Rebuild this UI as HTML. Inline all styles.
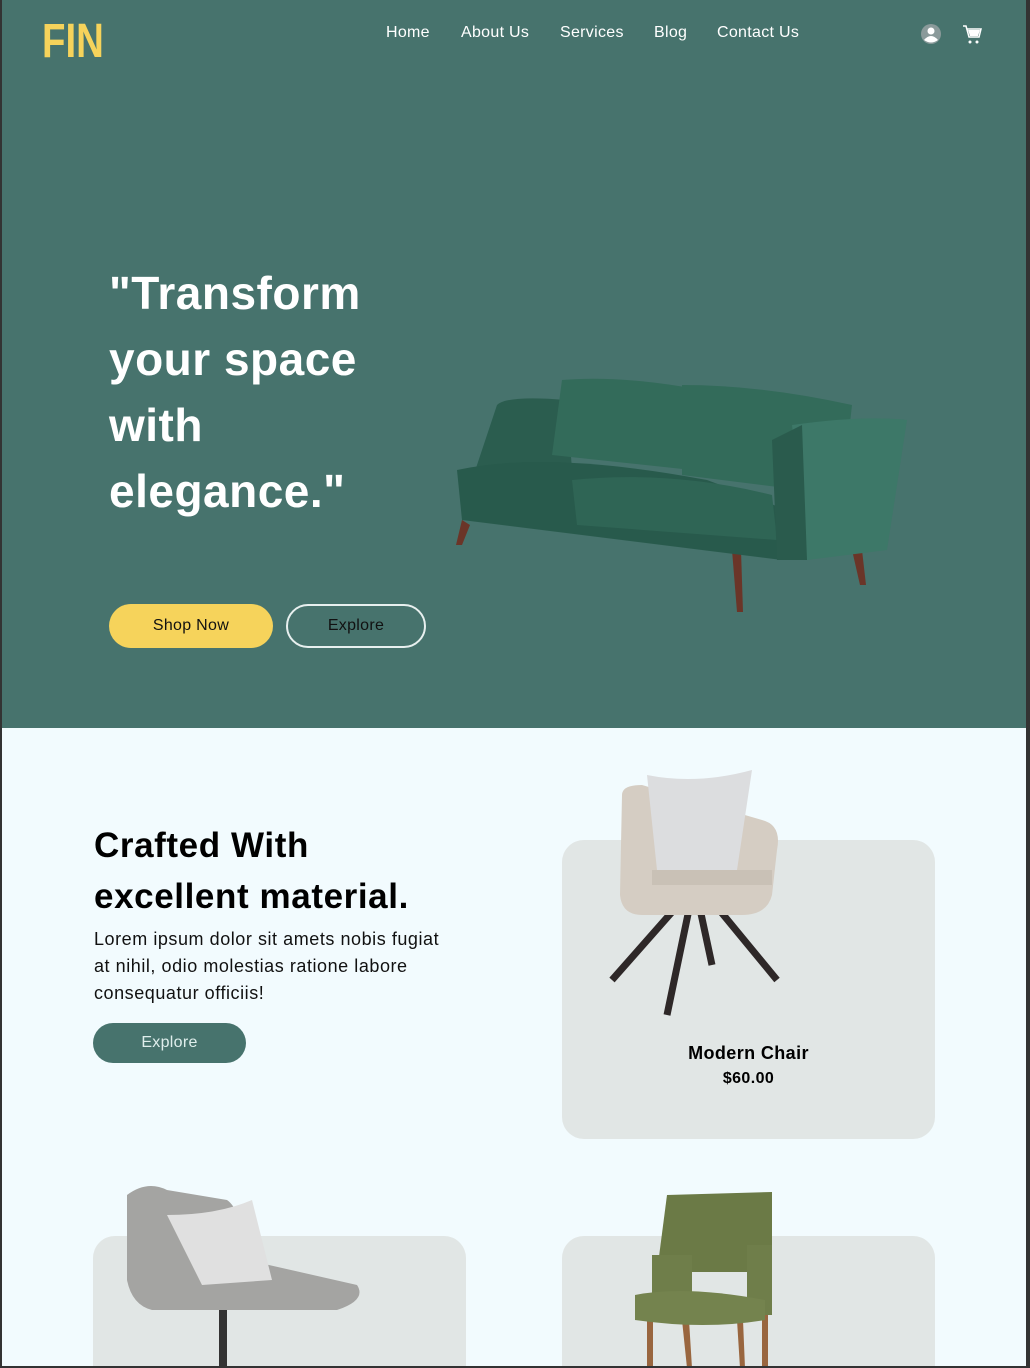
<!DOCTYPE html>
<html><head><style>
*{margin:0;padding:0;box-sizing:border-box}
body{width:1030px;height:1368px;overflow:hidden;background:#333;font-family:"Liberation Sans",sans-serif;position:relative}
.page{position:absolute;left:2px;top:0;width:1024px;height:1366px;background:#f2fbfe;overflow:hidden}
.hero{position:absolute;left:0;top:0;width:1024px;height:728px;background:#47736d}
.logo{position:absolute;left:40px;top:14px;color:#f6d35b;font-weight:bold;font-size:48px;letter-spacing:0;transform:scaleX(.8);transform-origin:left}
.nav{position:absolute;top:24px;color:#fff;font-size:16px;letter-spacing:.3px}
h1{position:absolute;left:107px;top:260px;color:#fff;font-size:46px;line-height:66px;font-weight:900;letter-spacing:.5px}
.btn{position:absolute;border-radius:22px;font-size:16px;display:flex;align-items:center;justify-content:center;letter-spacing:.3px}
.card{position:absolute;background:#e1e6e5;border-radius:22px}
h2{position:absolute;left:92px;top:820px;font-size:35px;line-height:51px;font-weight:900;color:#000;letter-spacing:.6px}
p{position:absolute;left:92px;top:926px;font-size:18px;line-height:27px;color:#111;letter-spacing:.55px}
</style></head><body>
<div class="page">
<div class="hero">
<div class="logo">FIN</div>
<div class="nav" style="left:384px">Home</div>
<div class="nav" style="left:459px">About Us</div>
<div class="nav" style="left:558px">Services</div>
<div class="nav" style="left:652px">Blog</div>
<div class="nav" style="left:715px">Contact Us</div>
<svg style="position:absolute;left:918px;top:23px" width="22" height="22"><circle cx="11" cy="11" r="10" fill="#8a9a9a"/><circle cx="11" cy="8" r="3.5" fill="#fff"/><path d="M4 17q7-8 14 0q-7 5-14 0z" fill="#fff"/></svg>
<svg style="position:absolute;left:960px;top:24px" width="22" height="22"><path d="M1 2h3l3 11h10l2-8H5" fill="none" stroke="#fff" stroke-width="1.5"/><path d="M6 6h12l-2 6H8z" fill="#fff"/><circle cx="8" cy="18" r="1.5" fill="#fff"/><circle cx="15" cy="18" r="1.5" fill="#fff"/></svg>
<h1>"Transform<br>your space<br>with<br>elegance."</h1>
<div class="btn" style="left:107px;top:604px;width:164px;height:44px;background:#f6d35b;color:#111">Shop Now</div>
<div class="btn" style="left:284px;top:604px;width:140px;height:44px;border:2px solid #e8f0ef;color:#111">Explore</div>
<svg style="position:absolute;left:440px;top:370px" width="470" height="250">
<path d="M20 150l-6 25h6l8-20z" fill="#6b3528"/><path d="M290 180l5 62h6l-2-62z" fill="#6b3528"/><path d="M410 180l8 35h6l-4-35z" fill="#6b3528"/>
<path d="M55 35q10-10 70-5l5 70-100 10z" fill="#2b5d4f"/>
<path d="M120 10q60-5 140 10l-10 80-140-15z" fill="#336b5a"/>
<path d="M240 15q80 0 170 20l-10 90-160-20z" fill="#336b5a"/>
<path d="M15 100q90-20 250 10l80 30-5 50-320-40z" fill="#285a4c"/>
<path d="M130 110q100-10 200 15l5 45-200-15z" fill="#2f6555"/>
<path d="M350 55q70-10 115-5l-20 130-80 10z" fill="#3d7868"/>
<path d="M330 70l30-15 5 135-30 0z" fill="#2a5b4d"/>
</svg>
</div>
<h2>Crafted With<br>excellent material.</h2>
<p>Lorem ipsum dolor sit amets nobis fugiat<br>at nihil, odio molestias ratione labore<br>consequatur officiis!</p>
<div class="btn" style="left:91px;top:1023px;width:153px;height:40px;background:#47736d;color:#dfeeec">Explore</div>
<div class="card" style="left:560px;top:840px;width:373px;height:299px"></div>
<div class="card" style="left:91px;top:1236px;width:373px;height:200px"></div>
<div class="card" style="left:560px;top:1236px;width:373px;height:200px"></div>
<svg style="position:absolute;left:600px;top:765px" width="190" height="260">
<path d="M85 130L10 215M90 130l-25 120M95 130l15 70M105 130l70 85" stroke="#2e2828" stroke-width="7"/>
<path d="M20 30q0-10 20-10l120 35q20 5 15 30l-5 45q-5 20-30 20H40q-20 0-22-20z" fill="#d5cdc3"/>
<path d="M45 10q50 10 105-5l-15 100H55z" fill="#dcdddf"/>
<path d="M50 105h120v15H50z" fill="#c9c1b6"/>
</svg>
<div style="position:absolute;left:560px;top:1043px;width:373px;text-align:center;font-weight:bold;font-size:18px;color:#000;letter-spacing:.4px">Modern Chair</div>
<div style="position:absolute;left:560px;top:1070px;width:373px;text-align:center;font-weight:bold;font-size:16px;color:#000;letter-spacing:.4px">$60.00</div>
<svg style="position:absolute;left:120px;top:1185px" width="250" height="183">
<rect x="97" y="125" width="8" height="58" fill="#333"/>
<path d="M5 10q20-15 40-5l60 10q15 10 20 60l110 25q10 15-20 25L30 125q-20-5-25-30z" fill="#a4a4a2"/>
<path d="M45 30q50 0 85-15l20 80-70 5z" fill="#e0e0e0"/>
</svg>
<svg style="position:absolute;left:625px;top:1190px" width="160" height="178">
<path d="M20 120v58h6v-58zM135 120v58h6v-58zM55 130l5 48h5l-3-48zM110 130l3 48h5l-2-48z" fill="#99663f"/>
<path d="M40 5l105-3v80H30z" fill="#6b7a46"/>
<path d="M25 65h40v60H25zM120 55h25v70h-25z" fill="#6f7e4a"/>
<path d="M8 105q50-10 130 5v20q-60 10-130 0z" fill="#74834e"/>
</svg>
</div>
</body></html>
